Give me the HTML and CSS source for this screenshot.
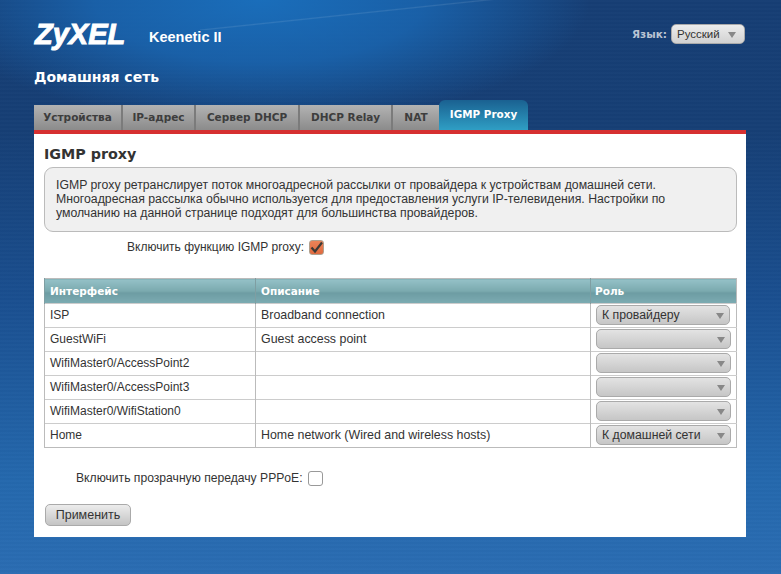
FILE: index.html
```html
<!DOCTYPE html>
<html lang="ru">
<head>
<meta charset="utf-8">
<title>Keenetic II</title>
<link rel="stylesheet" href="styles.css">
</head>
<body>
<div class="page">
  <header class="top">
    <div class="brand">
      <span class="logo">ZyXEL</span>
      <span class="model">Keenetic II</span>
    </div>
    <div class="lang">
      <span class="lang-label">Язык:</span>
      <span class="select select-lang"><span class="select-text">Русский</span><i class="arrow"></i></span>
    </div>
  </header>
  <h1 class="section">Домашняя сеть</h1>
  <nav class="tabs">
    <a class="tab tab-1">Устройства</a>
    <a class="tab tab-2">IP-адрес</a>
    <a class="tab tab-3">Сервер DHCP</a>
    <a class="tab tab-4">DHCP Relay</a>
    <a class="tab tab-5">NAT</a>
    <a class="tab tab-active">IGMP Proxy</a>
  </nav>
  <main class="panel">
    <h2 class="title">IGMP proxy</h2>
    <div class="info">IGMP proxy ретранслирует поток многоадресной рассылки от провайдера к устройствам домашней сети.<br>Многоадресная рассылка обычно используется для предоставления услуги IP-телевидения. Настройки по<br>умолчанию на данной странице подходят для большинства провайдеров.</div>
    <div class="field field-igmp">
      <span>Включить функцию IGMP proxy:</span>
      <span class="check check-on"><svg class="tick" width="15" height="15" viewBox="0 0 15 15"><path d="M2.5 7.5 L6 11.5 L13 2.5" fill="none" stroke="#3c3a36" stroke-width="2.2"/></svg></span>
    </div>
    <table class="grid">
      <thead>
        <tr><th class="c1">Интерфейс</th><th class="c2">Описание</th><th class="c3">Роль</th></tr>
      </thead>
      <tbody>
        <tr><td class="name">ISP</td><td class="desc">Broadband connection</td><td><span class="select select-a"><span class="select-text">К провайдеру</span><i class="arrow"></i></span></td></tr>
        <tr><td class="name">GuestWiFi</td><td class="desc">Guest access point</td><td><span class="select"><span class="select-text"></span><i class="arrow"></i></span></td></tr>
        <tr><td class="name">WifiMaster0/AccessPoint2</td><td class="desc"></td><td><span class="select"><span class="select-text"></span><i class="arrow"></i></span></td></tr>
        <tr><td class="name">WifiMaster0/AccessPoint3</td><td class="desc"></td><td><span class="select"><span class="select-text"></span><i class="arrow"></i></span></td></tr>
        <tr><td class="name">WifiMaster0/WifiStation0</td><td class="desc"></td><td><span class="select"><span class="select-text"></span><i class="arrow"></i></span></td></tr>
        <tr><td class="name">Home</td><td class="desc">Home network (Wired and wireless hosts)</td><td><span class="select"><span class="select-text">К домашней сети</span><i class="arrow"></i></span></td></tr>
      </tbody>
    </table>
    <div class="field field-pppoe">
      <span>Включить прозрачную передачу PPPoE:</span>
      <span class="check"></span>
    </div>
    <button class="apply" type="button">Применить</button>
  </main>
</div>
</body>
</html>
```
FILE: styles.css
```css
* { box-sizing: border-box; }
html, body { margin: 0; height: 100%; }
body {
  width: 781px;
  height: 574px;
  overflow: hidden;
  font-family: "Liberation Sans", Arial, sans-serif;
  color: #333;
  background:
    linear-gradient(174deg, rgba(255,255,255,0) 0, rgba(255,255,255,0) 47%, rgba(255,255,255,.1) 49%, rgba(255,255,255,0) 51%) 200px 0 / 300px 30px no-repeat,
    radial-gradient(ellipse 330px 125px at 260px 0, rgba(26,112,190,.95) 0, rgba(26,104,180,.8) 50%, rgba(22,62,116,0) 100%),
    repeating-linear-gradient(to bottom, rgba(255,255,255,.012) 0 2px, rgba(0,0,0,.012) 2px 4px),
    linear-gradient(to bottom, #163e74 0, #163f75 130px, #1a4f90 300px, #2468ad 480px, #2a6cb2 574px);
}
.page { height: 574px; padding: 0 35px 0 34px; display: flex; flex-direction: column; }
.top { height: 65px; display: flex; justify-content: space-between; align-items: flex-start; }
.brand { display: flex; align-items: center; padding-top: 18px; }
.logo {
  font: italic bold 29px/32px "Liberation Sans", sans-serif;
  color: #fff;
  -webkit-text-stroke: 1px #fff;
  width: 115px;
  padding-left: 1px;
}
.model { font: bold 14.5px/18px "Liberation Sans", sans-serif; color: #fff; margin-top: 5px; }
.lang { display: flex; align-items: center; gap: 4px; padding: 24px 1px 0 0; }
.lang-label { font: bold 10.5px/20px "DejaVu Sans", sans-serif; color: #b9c4d3; }
.section { margin: 4px 0 0; height: 31px; font: bold 14px/16px "DejaVu Sans", sans-serif; color: #fff; }
.tabs { display: flex; align-items: flex-end; height: 30px; }
.tab {
  height: 25px;
  font: bold 10.5px/25px "DejaVu Sans", sans-serif;
  color: #3d3d3d;
  text-align: center;
  background: linear-gradient(to bottom, #b3b3b3, #8b8b8b);
  border-right: 2px solid #7b7b7b;
}
.tab-1 { width: 89px; }
.tab-2 { width: 73px; }
.tab-3 { width: 104px; }
.tab-4 { width: 93px; }
.tab-5 { width: 46px; border-right: 0; }
.tab-active {
  width: 89px;
  height: 30px;
  border: 0;
  border-radius: 6px 6px 0 0;
  font-size: 10.4px;
  line-height: 29px;
  color: #fff;
  background: linear-gradient(to bottom, #1a6191, #2f9ec4);
}
.panel {
  width: 712px;
  height: 407px;
  border-top: 4px solid #d63031;
  background: #fff;
  padding: 12px 9px 0 10px;
}
.title { margin: 0; height: 18px; font: bold 14.3px/17px "DejaVu Sans", sans-serif; color: #333; }
.info {
  margin-top: 3px;
  height: 65px;
  padding: 10px 11px;
  border: 1px solid #bbb;
  border-radius: 9px;
  background: #f0f0f0;
  font-size: 12.28px;
  line-height: 14px;
  color: #333;
}
.field { display: flex; align-items: center; gap: 5px; color: #333; }
.field-igmp { height: 16px; margin-top: 7px; padding-left: 83px; font-size: 12px; }
.field-pppoe { height: 16px; margin-top: 22px; padding-left: 32px; font-size: 12.15px; }
.check {
  width: 15px;
  height: 15px;
  border: 1px solid #999;
  border-radius: 3px;
  background: #fff;
  position: relative;
}
.check-on { background: linear-gradient(to bottom, #ec8358, #df6a3f); border-color: #b0a08e; }
.tick { position: absolute; left: -1px; top: -1px; }
.grid {
  margin-top: 23px;
  width: 692px;
  table-layout: fixed;
  border-collapse: collapse;
  border: 1px solid #bbb;
}
.c1 { width: 211px; }
.c2 { width: 335px; }
.c3 { width: 146px; }
.grid th {
  height: 25px;
  padding: 0 5px;
  text-align: left;
  font: bold 10.5px/14px "DejaVu Sans", sans-serif;
  color: #fff;
  background: linear-gradient(to bottom, #94c1c7 0, #7aa9ae 50%, #6d9ca3 55%, #7cacb2 100%);
  border-left: 1px solid #7f9ea2;
}
.grid .c3 { padding-left: 4px; }
.grid td {
  height: 24px;
  padding: 0 5px 2px;
  color: #333;
  border-top: 1px solid #ccc;
  border-left: 1px solid #bbb;
  vertical-align: middle;
}
.name { font-size: 12px; }
.desc { font-size: 12.4px; }
.select {
  position: relative;
  display: flex;
  align-items: center;
  width: 135px;
  height: 20px;
  padding: 0 5px;
  border: 1px solid #aaa;
  border-radius: 5px;
  background: linear-gradient(to bottom, #e3e3e3, #c6c6c6);
  font-size: 12.28px;
  color: #333;
}
.select-a { width: 134px; }
.select-lang { width: 74px; font-size: 11.5px; background: linear-gradient(to bottom, #ededed, #d2d2d2); }
.arrow {
  position: absolute;
  right: 5px;
  top: 7px;
  width: 0;
  height: 0;
  border-left: 4px solid transparent;
  border-right: 4px solid transparent;
  border-top: 6px solid #888;
}
.select-lang .arrow { right: 8px; }
.apply {
  display: block;
  margin: 18px 0 0 1px;
  width: 86px;
  height: 22px;
  padding: 0;
  border: 1px solid #aaa;
  border-radius: 5px;
  background: linear-gradient(to bottom, #ececec, #c4c4c4);
  font: 12.5px/18px "Liberation Sans", sans-serif;
  color: #333;
}
```
